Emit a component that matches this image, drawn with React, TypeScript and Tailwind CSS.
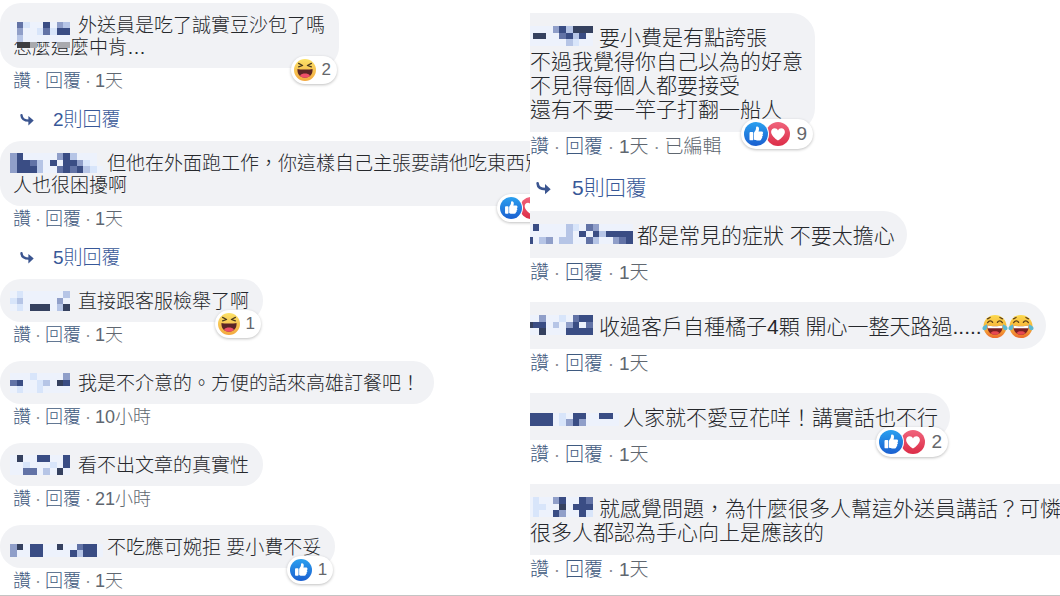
import { Fragment, useId, type ReactNode } from "react";
import clsx from "clsx";

type Size = "sm" | "lg";
type Reaction = "like" | "love" | "haha";

interface CommentData {
  name: string[];
  lines: ReactNode[];
  meta: string[];
  reactions?: Reaction[];
  count?: number;
  replies?: number;
  bleed?: boolean;
}

const CELL_COLORS: Record<string, string> = {
  D: "#3a4d84",
  N: "#35415f",
  M: "#6273a6",
  L: "#909fc9",
  S: "#b6c5e6",
  P: "#d8e5fa",
  W: "#edf2fc",
  K: "#3d3e42",
  G: "#a9aaae",
};

/* Pixelated stand-in for a commenter's name */
function MaskedName({ rows, size }: { rows: string[]; size: Size }) {
  const cols = Math.max(...rows.map((r) => r.length));
  return (
    <span
      className={clsx(
        "relative inline-block align-top",
        size === "sm" && "h-[22px]",
        size === "lg" && "h-6",
        size === "sm" && (cols > 10 ? "w-[94px]" : "w-[65px]"),
        size === "lg" && (cols > 14 ? "w-[107px]" : cols > 11 ? "w-[93px]" : "w-[69px]"),
      )}
    >
      <svg
        aria-hidden="true"
        className={clsx("absolute top-0 max-w-none", size === "sm" ? "-left-[3px]" : "-left-1")}
        width={(cols * 20) / 3}
        height={(rows.length * 20) / 3}
        viewBox={`0 0 ${cols} ${rows.length}`}
        shapeRendering="crispEdges"
      >
        {rows.map((row, y) =>
          row.split("").map((c, x) =>
            CELL_COLORS[c] ? <rect key={`${x}-${y}`} x={x} y={y} width="1" height="1" fill={CELL_COLORS[c]} /> : null,
          ),
        )}
      </svg>
    </span>
  );
}

function LikeIcon({ className }: { className: string }) {
  const id = useId();
  return (
    <svg viewBox="0 0 24 24" className={className} aria-hidden="true">
      <defs>
        <linearGradient id={id} x1="0" y1="0" x2="0" y2="1">
          <stop offset="0" stopColor="#2ba0ef" />
          <stop offset="1" stopColor="#1a5fd0" />
        </linearGradient>
      </defs>
      <circle cx="12" cy="12" r="12" fill={`url(#${id})`} />
      <path
        fill="#fff"
        d="M5.500 10.900c0-.5.4-.9.9-.9h2c.5 0 .9.4.9.9v6.500c0 .5-.4.900-.9.900h-2c-.5 0-.9-.4-.9-.9zM10 11c0-.6.300-1 .700-1.500.9-1.100 1.300-2.100 1.300-3.500 0-.9.300-1.500 1.100-1.500 1.400 0 2.100 1.300 1.900 3-.1.700-.3 1.300-.5 1.900h3c1 0 1.700.7 1.600 1.600 0 .6-.4 1-.8 1.200.5.3.7.800.6 1.300-.1.600-.5 1-1 1.100.3.300.4.700.3 1.200-.1.500-.5.900-1 1 .1.200.1.400 0 .7-.2.600-.8.900-1.500.9h-2.600c-1.200 0-2.200-.2-3.100-.9z"
      />
    </svg>
  );
}

function LoveIcon({ className }: { className: string }) {
  const id = useId();
  return (
    <svg viewBox="0 0 24 24" className={className} aria-hidden="true">
      <defs>
        <linearGradient id={id} x1="0" y1="0" x2="0" y2="1">
          <stop offset="0" stopColor="#f0647c" />
          <stop offset="1" stopColor="#dc2d48" />
        </linearGradient>
      </defs>
      <circle cx="12" cy="12" r="12" fill={`url(#${id})`} />
      <path
        fill="#fff"
        d="M12 18.600c-.3 0-6.900-4.300-6.900-8.500 0-2.200 1.600-3.800 3.600-3.800 1.500 0 2.700.9 3.300 2.100.6-1.200 1.800-2.100 3.300-2.100 2 0 3.600 1.600 3.600 3.800 0 4.200-6.600 8.500-6.900 8.500z"
      />
    </svg>
  );
}

function HahaIcon({ className }: { className: string }) {
  const id = useId();
  return (
    <svg viewBox="0 0 24 24" className={className} aria-hidden="true">
      <defs>
        <linearGradient id={id} x1="0" y1="0" x2="0" y2="1">
          <stop offset="0" stopColor="#fce268" />
          <stop offset="1" stopColor="#f3a83e" />
        </linearGradient>
      </defs>
      <circle cx="12" cy="12" r="12" fill={`url(#${id})`} />
      <path d="M5 4.800l4.400 2.300L5 8.600M19 4.800l-4.400 2.300L19 8.600" fill="none" stroke="#4b3b20" strokeWidth="1.300" strokeLinecap="round" strokeLinejoin="round" />
      <path d="M3.800 10.800c2.600.9 13.800.9 16.400 0 .6 5.200-3 9.600-8.200 9.600s-8.800-4.400-8.200-9.600z" fill="#5a2426" />
      <path d="M6.600 18.200c1.100-1.700 3.100-2.300 5.400-2.300s4.300.6 5.400 2.300c-1.400 1.500-3.200 2.200-5.400 2.200s-4-.7-5.400-2.200z" fill="#ee4f68" />
    </svg>
  );
}

function JoyEmoji() {
  const id = useId();
  return (
    <svg viewBox="0 0 26 26" role="img" aria-label="笑到流淚" className="-my-px inline-block size-[26px] align-top">
      <defs>
        <linearGradient id={id} x1="0" y1="0" x2="0" y2="1">
          <stop offset="0" stopColor="#fbd94f" />
          <stop offset="0.550" stopColor="#f7b338" />
          <stop offset="1" stopColor="#ec6a2c" />
        </linearGradient>
      </defs>
      <circle cx="13" cy="12.500" r="11.500" fill={`url(#${id})`} />
      <path d="M5.600 8.700c1-2.400 3.900-2.600 5-.3M15.400 8.400c1.100-2.300 4-2.100 5 .3M5.500 4.800l2.600-1.300M20.500 4.800l-2.600-1.300" fill="none" stroke="#5e4018" strokeWidth="1.300" strokeLinecap="round" />
      <path d="M5.500 11.500c4 1 11 1 15 0 .6 5-2.500 9.300-7.500 9.300S4.900 16.500 5.500 11.500z" fill="#7a1f22" />
      <path d="M5.500 11.500c4 1 11 1 15 0 0 1 0 1.800-.3 2.700H5.800c-.3-.9-.3-1.700-.3-2.700z" fill="#fff" />
      <path d="M8.500 19c1.200-1.300 2.700-1.700 4.500-1.700s3.300.4 4.500 1.700c-1.200 1.100-2.700 1.800-4.500 1.800S9.700 20.100 8.500 19z" fill="#e8484f" />
      <path d="M4.900 10.300c.7 2.600.2 5.600-2 6C1 16.500.1 15 .6 13.500c.5-1.600 2.600-2 4.300-3.200zM21.100 10.300c-.7 2.600-.2 5.600 2 6 1.900.2 2.800-1.300 2.300-2.800-.5-1.600-2.600-2-4.300-3.200z" fill="#5cb8d0" />
    </svg>
  );
}

const REACTION_ICONS = { like: LikeIcon, love: LoveIcon, haha: HahaIcon };

function ReplyArrow({ size }: { size: Size }) {
  return (
    <svg viewBox="0 0 14 12" aria-hidden="true" className={size === "sm" ? "h-3 w-3.5" : "h-[13px] w-[15px]"}>
      <path d="M1.500 1.200c.2 3.800 2.700 5.400 7.500 5.400" fill="none" stroke="#3b5590" strokeWidth="2.400" strokeLinecap="round" />
      <path d="M8.400 1.900l5.300 4.700-5.300 4.800z" fill="#3b5590" />
    </svg>
  );
}

function ReactionBadge({ reactions, count, size }: { reactions: Reaction[]; count?: number; size: Size }) {
  return (
    <button
      type="button"
      aria-label="心情"
      className={clsx(
        "absolute right-0.5 z-10 flex items-center rounded-full bg-white text-[#65676b] shadow-[0_1px_3px_rgba(0,0,0,0.25)]",
        size === "sm" ? "-bottom-4 h-7 pr-1.5 pl-[3px] text-[17px]" : "-bottom-[17px] h-[30px] pr-1.5 pl-[3px] text-[19px]",
      )}
    >
      <span className="flex flex-row-reverse">
        {[...reactions].reverse().map((r, i, all) => {
          const Icon = REACTION_ICONS[r];
          const first = i === all.length - 1;
          return (
            <span key={r} className={clsx("rounded-full bg-white", !first && "-ml-0.5", first && all.length > 1 && "z-10 ring-1 ring-white")}>
              <Icon className={size === "sm" ? "size-[22px]" : "size-6"} />
            </span>
          );
        })}
      </span>
      <span className="ml-1.5">{count}</span>
    </button>
  );
}

function Comment({ data, size }: { data: CommentData; size: Size }) {
  const sm = size === "sm";
  return (
    <li>
      <div
        className={clsx(
          "relative w-max whitespace-nowrap bg-[#f1f2f5] text-[#26282c]",
          sm ? "rounded-[21px] pt-3 pb-[9px] pl-[13px] text-[19px] leading-[22px]" : "rounded-r-[24px] pt-[13px] pr-3 pb-2.5 text-[21px] leading-6",
          sm && (data.bleed ? "pr-3" : "pr-[14px]"),
          !sm && data.bleed && "min-w-full rounded-r-none",
        )}
      >
        {data.lines.map((line, i) => (
          <p key={i}>
            {i === 0 && <MaskedName rows={data.name} size={size} />}
            {line}
          </p>
        ))}
        {data.reactions && <ReactionBadge reactions={data.reactions} count={data.count} size={size} />}
      </div>

      <div className={clsx("flex items-center text-[#606770]", sm ? "h-[26px] pl-[13px] text-[18px]" : "h-[30px] text-[19px]")}>
        <button type="button" className="text-[#3f5a80]">讚</button>
        <Dot size={size} />
        <button type="button" className="text-[#3f5a80]">回覆</button>
        {data.meta.map((m) => (
          <Fragment key={m}>
            <Dot size={size} />
            <span>{m}</span>
          </Fragment>
        ))}
      </div>

      {data.replies ? (
        <button
          type="button"
          className={clsx(
            "flex items-center text-[#385898]",
            sm ? "mt-[13px] mb-2 ml-5 h-[26px] gap-[19px] text-[19px]" : "mt-3 mb-[9px] ml-1.5 h-7 gap-[21px] text-[21px]",
          )}
        >
          <ReplyArrow size={size} />
          {data.replies}則回覆
        </button>
      ) : (
        <div className={sm ? "h-[13px]" : "h-3.5"} />
      )}
    </li>
  );
}

function Dot({ size }: { size: Size }) {
  return <span className={clsx("text-center text-[#8a8d91]", size === "sm" ? "w-[14px]" : "w-4")}>·</span>;
}

const LEFT: CommentData[] = [
  {
    name: [".........", "WMPWWDWLS", "WLWWPMPDD", "WSWWWWWWW", ".KKG...GG"],
    lines: ["外送員是吃了誠實豆沙包了嗎", "怎麼這麼中肯…"],
    meta: ["1天"],
    reactions: ["haha"],
    count: 2,
    replies: 2,
  },
  {
    name: ["LDWWWWWLDSWWW.", "LDDMSWDWDDLPW.", "LDDDSWWMDMDSPW"],
    lines: ["但他在外面跑工作，你這樣自己主張要請他吃東西別", "人也很困擾啊"],
    meta: ["1天"],
    reactions: ["like", "love"],
    replies: 5,
    bleed: true,
  },
  {
    name: ["WPWWWWWWS", "PSWWWWWLW", "WPWNNNWSN"],
    lines: ["直接跟客服檢舉了啊"],
    meta: ["1天"],
    reactions: ["haha"],
    count: 1,
  },
  {
    name: ["WWWPWWWWL", "MDWWPSWND", "WPWWPWWWW"],
    lines: ["我是不介意的。方便的話來高雄訂餐吧！"],
    meta: ["10小時"],
  },
  {
    name: ["WNWWDDWWD", "WWPWWWPWD", "WWMMWSWNW"],
    lines: ["看不出文章的真實性"],
    meta: ["21小時"],
  },
  {
    name: [".............", "LNWDDWWNWWMDDW", "LWWDDWWWWDSDDW"],
    lines: ["不吃應可婉拒 要小費不妥"],
    meta: ["1天"],
    reactions: ["like"],
    count: 1,
  },
];

const RIGHT: CommentData[] = [
  {
    name: ["WWWWLDSNNN", "WNNWWMDSDW", "WWWWWWSPWW"],
    lines: ["要小費是有點誇張", "不過我覺得你自己以為的好意", "不見得每個人都要接受", "還有不要一竿子打翻一船人"],
    meta: ["1天", "已編輯"],
    reactions: ["like", "love"],
    count: 9,
    replies: 5,
  },
  {
    name: ["WDWWWWSPWMLWWWWW", "WWWWWWSWDWDSDDDD", "DWSLWSSWWMSWWLMD"],
    lines: ["都是常見的症狀 不要太擔心"],
    meta: ["1天"],
  },
  {
    name: ["WWLWWPWMDD", "NDDWSWLDWM", "WWNWWWDDDD"],
    lines: [
      <>
        收過客戶自種橘子4顆 開心一整天路過.....
        <JoyEmoji />
        <JoyEmoji />
      </>,
    ],
    meta: ["1天"],
  },
  {
    name: ["..............", "DDDDWPWDDWWDDW", "DDDDWPLDLWWWWW"],
    lines: ["人家就不愛豆花咩！講實話也不行"],
    meta: ["1天"],
    reactions: ["like", "love"],
    count: 2,
  },
  {
    name: ["WPWWLDWWDM", "WPPWWNWDDD", "WPWWDLWWDP"],
    lines: ["就感覺問題，為什麼很多人幫這外送員講話？可憐", "很多人都認為手心向上是應該的"],
    meta: ["1天"],
    bleed: true,
  },
];

export default function App() {
  return (
    <main
      lang="zh-Hant"
      className="grid min-h-screen grid-cols-2 overflow-hidden border-b border-[#c4c4c4] bg-white font-['Liberation_Sans','Noto_Sans_CJK_TC',sans-serif] font-light"
    >
      <ul className="-mb-4 overflow-hidden pt-[3px]">
        {LEFT.map((c, i) => (
          <Comment key={i} data={c} size="sm" />
        ))}
      </ul>
      <ul className="-mb-4 overflow-hidden pt-[13px]">
        {RIGHT.map((c, i) => (
          <Comment key={i} data={c} size="lg" />
        ))}
      </ul>
    </main>
  );
}
